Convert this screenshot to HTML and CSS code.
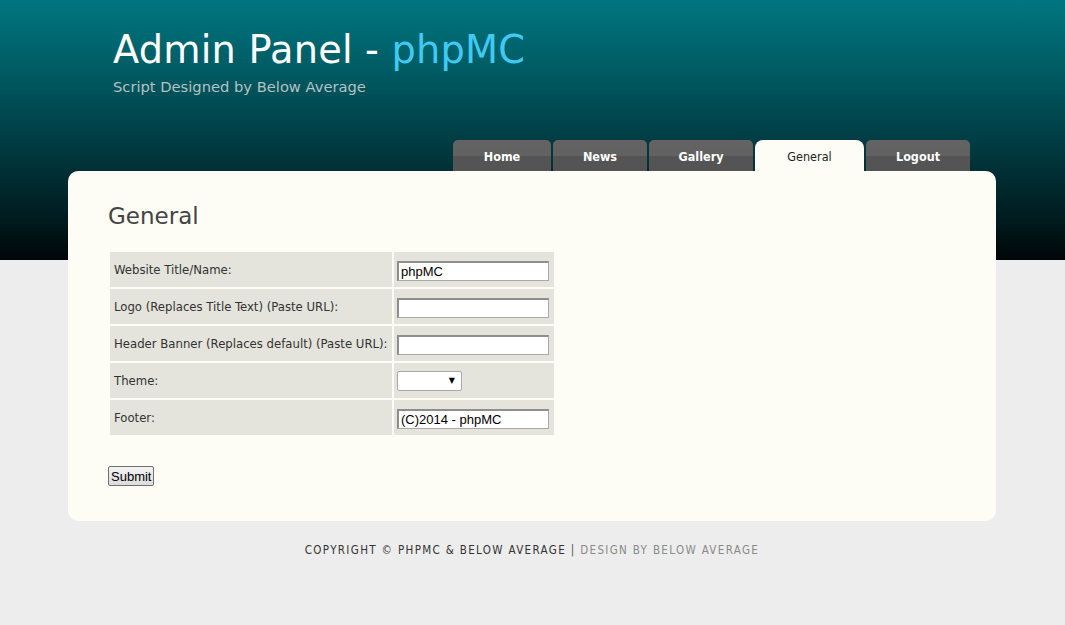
FILE: index.html
```html
<!DOCTYPE html>
<html>
<head>
<meta charset="utf-8">
<title>Admin Panel - phpMC</title>
<link rel="stylesheet" href="styles.css">
</head>
<body>
<div class="header">
  <div class="header-inner">
    <div class="brand">
      <h1 class="title">Admin Panel - <span class="accent">phpMC</span></h1>
      <div class="subtitle">Script Designed by Below Average</div>
    </div>
    <ul class="tabs">
      <li class="tab tab-home"><a href="#">Home</a></li>
      <li class="tab tab-news"><a href="#">News</a></li>
      <li class="tab tab-gallery"><a href="#">Gallery</a></li>
      <li class="tab tab-general active"><a href="#">General</a></li>
      <li class="tab tab-logout"><a href="#">Logout</a></li>
    </ul>
  </div>
</div>
<div class="content">
  <div class="main">
    <div class="panel">
      <h2 class="heading">General</h2>
      <form class="form">
        <table class="settings">
          <tr><td class="label">Website Title/Name:</td><td class="field"><input class="text" type="text" value="phpMC"></td></tr>
          <tr><td class="label">Logo (Replaces Title Text) (Paste URL):</td><td class="field"><input class="text" type="text" value=""></td></tr>
          <tr><td class="label">Header Banner (Replaces default) (Paste URL):</td><td class="field"><input class="text" type="text" value=""></td></tr>
          <tr><td class="label">Theme:</td><td class="field"><div class="select"><span class="arrow">&#9660;</span></div></td></tr>
          <tr><td class="label">Footer:</td><td class="field"><input class="text" type="text" value="(C)2014 - phpMC"></td></tr>
        </table>
        <button class="submit" type="button">Submit</button>
      </form>
    </div>
    <div class="footer"><span class="copy">Copyright &copy; phpMC &amp; Below Average</span> <span class="sep">|</span> <span class="design">Design by Below Average</span></div>
  </div>
</div>
</body>
</html>
```

FILE: styles.css
```css
html, body {
  margin: 0;
  padding: 0;
}
body {
  background: #ededed;
  font-family: "Open Sans", "DejaVu Sans", sans-serif;
}
.header {
  height: 260px;
  padding-right: 1px;
  background: linear-gradient(to bottom, #007680 0%, #005860 30%, #00363c 60%, #001a1d 85%, #000607 100%);
}
.header-inner {
  width: 928px;
  margin: 0 auto;
  height: 260px;
  display: flex;
  flex-direction: column;
  justify-content: space-between;
}
.brand {
  padding: 26px 0 0 45px;
}
.title {
  margin: 0;
  font-family: "DejaVu Sans", sans-serif;
  font-weight: normal;
  font-size: 38.3px;
  line-height: 48px;
  color: #ffffff;
  letter-spacing: 0.2px;
}
.accent {
  color: #3fc9f3;
}
.subtitle {
  margin-top: 4px;
  font-family: "DejaVu Sans", sans-serif;
  font-size: 14.7px;
  color: #b3c2c2;
}
.tabs {
  list-style: none;
  margin: 0;
  padding: 0 26px 0 0;
  display: flex;
  justify-content: flex-end;
  gap: 2px;
  margin-bottom: 89px;
}
.tab {
  height: 31px;
  border-radius: 5px 5px 0 0;
  background: linear-gradient(to bottom, #636363 0%, #616161 50%, #545454 52%, #545454 100%);
  display: flex;
  align-items: center;
  justify-content: center;
}
.tab a {
  color: #ffffff;
  text-decoration: none;
  font-family: "DejaVu Sans Condensed", "DejaVu Sans", sans-serif;
  font-size: 12.5px;
  font-weight: bold;
  padding-top: 2px;
}
.tab-home { width: 98px; }
.tab-news { width: 94px; }
.tab-gallery { width: 104px; }
.tab-general { width: 109px; }
.tab-logout { width: 104px; }
.tab.active {
  background: #fdfdf5;
  border-radius: 8px 8px 0 0;
}
.tab.active a {
  color: #222222;
  font-weight: normal;
}
.content {
  padding-right: 1px;
}
.main {
  width: 928px;
  margin: -89px auto 0;
}
.panel {
  background: #fdfdf5;
  border-radius: 10px;
  padding: 30px 40px 34px 40px;
  height: 286px;
}
.heading {
  margin: 0 0 19px 0;
  font-family: "DejaVu Sans", sans-serif;
  font-weight: normal;
  font-size: 23px;
  color: #444444;
  line-height: 30px;
}
.settings {
  border-collapse: separate;
  border-spacing: 2px;
}
.settings td {
  background: #e4e3dc;
  height: 35px;
  padding: 0;
}
.label {
  width: 278px;
  padding-left: 4px !important;
  font-family: "DejaVu Sans Condensed", "DejaVu Sans", sans-serif;
  font-size: 13px;
  color: #333333;
}
.field {
  width: 153px;
  padding-left: 3px !important;
  padding-right: 4px !important;
}
.text {
  box-sizing: border-box;
  width: 152px;
  height: 20px;
  margin: 0;
  padding: 1px 2px;
  border: 1px solid #a9a9a9;
  border-top: 2px solid #8e8e8e;
  border-left: 2px solid #8e8e8e;
  background: #ffffff;
  font-family: "Liberation Sans", Arial, sans-serif;
  font-size: 13px;
  color: #000000;
}
.select {
  box-sizing: border-box;
  width: 65px;
  height: 20px;
  border: 1px solid #a9a9a9;
  border-radius: 2px;
  background: #ffffff;
  display: flex;
  align-items: center;
  justify-content: flex-end;
  padding-right: 6px;
}
.arrow {
  font-size: 8px;
  color: #000000;
  font-family: "DejaVu Sans", sans-serif;
}
.submit {
  margin-top: 29px;
  height: 20px;
  padding: 0 2px;
  border: 1px solid #707070;
  border-radius: 2px;
  background: linear-gradient(to bottom, #f3f3f3, #dcdcdc);
  font-family: "Liberation Sans", Arial, sans-serif;
  font-size: 13px;
  color: #000000;
}
.footer {
  text-align: center;
  margin-top: 22px;
  font-family: "DejaVu Sans Condensed", "DejaVu Sans", sans-serif;
  font-size: 11.5px;
  letter-spacing: 1.35px;
  text-transform: uppercase;
}
.copy { color: #333333; }
.sep { color: #555555; }
.design { color: #8a8a8a; }
```
